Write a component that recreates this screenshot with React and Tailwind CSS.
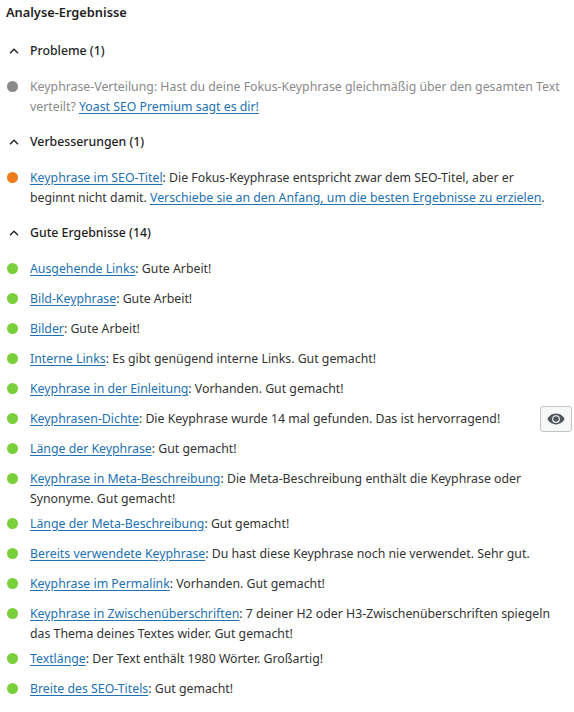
const problems = [
  {
    color: "bg-[#888888]",
    muted: true,
    parts: [
      { text: "Keyphrase-Verteilung: Hast du deine Fokus-Keyphrase gleichmäßig über den gesamten Text verteilt? " },
      { text: "Yoast SEO Premium sagt es dir!", link: true },
    ],
  },
];

const improvements = [
  {
    color: "bg-[#ee7c1b]",
    parts: [
      { text: "Keyphrase im SEO-Titel", link: true },
      { text: ": Die Fokus-Keyphrase entspricht zwar dem SEO-Titel, aber er beginnt nicht damit. " },
      { text: "Verschiebe sie an den Anfang, um die besten Ergebnisse zu erzielen", link: true },
      { text: "." },
    ],
  },
];

const good = [
  ["Ausgehende Links", ": Gute Arbeit!"],
  ["Bild-Keyphrase", ": Gute Arbeit!"],
  ["Bilder", ": Gute Arbeit!"],
  ["Interne Links", ": Es gibt genügend interne Links. Gut gemacht!"],
  ["Keyphrase in der Einleitung", ": Vorhanden. Gut gemacht!"],
  ["Keyphrasen-Dichte", ": Die Keyphrase wurde 14 mal gefunden. Das ist hervorragend!", true],
  ["Länge der Keyphrase", ": Gut gemacht!"],
  ["Keyphrase in Meta-Beschreibung", ": Die Meta-Beschreibung enthält die Keyphrase oder Synonyme. Gut gemacht!"],
  ["Länge der Meta-Beschreibung", ": Gut gemacht!"],
  ["Bereits verwendete Keyphrase", ": Du hast diese Keyphrase noch nie verwendet. Sehr gut."],
  ["Keyphrase im Permalink", ": Vorhanden. Gut gemacht!"],
  ["Keyphrase in Zwischenüberschriften", ": 7 deiner H2 oder H3-Zwischenüberschriften spiegeln das Thema deines Textes wider. Gut gemacht!"],
  ["Textlänge", ": Der Text enthält 1980 Wörter. Großartig!"],
  ["Breite des SEO-Titels", ": Gut gemacht!"],
].map(([link, rest, eye]) => ({
  color: "bg-[#7ad03a]",
  eye,
  parts: [{ text: link, link: true }, { text: rest }],
}));

function Chevron() {
  return (
    <svg width="10" height="6" viewBox="0 0 10 6" className="shrink-0">
      <path d="M1 5.2 L5 1.2 L9 5.2" fill="none" stroke="#1e1e1e" strokeWidth="1.3" />
    </svg>
  );
}

function EyeIcon() {
  return (
    <svg width="18" height="12" viewBox="0 0 20 13">
      <path d="M10 0.5C5 0.5 1.6 4 0.5 6.5 1.6 9 5 12.5 10 12.5s8.4-3.5 9.5-6C18.4 4 15 0.5 10 0.5z" fill="#50575e" />
      <circle cx="10" cy="6.5" r="4.3" fill="#ffffff" />
      <circle cx="10" cy="6.5" r="3.1" fill="#50575e" />
    </svg>
  );
}

function Item({ item }) {
  return (
    <li className="flex items-start min-h-[24px] mb-[6px]">
      <span className={`mt-[4px] ml-[7px] h-[11px] w-[11px] shrink-0 rounded-full ${item.color}`} />
      <p
        className={`ml-[12px] flex-1 pr-[12px] text-[12.3px] leading-[19.5px] ${
          item.muted ? "text-[#8a8a8a]" : "text-[#333333]"
        }`}
      >
        {item.parts.map((p, i) =>
          p.link ? (
            <a key={i} href="#" className="text-[#2271b1] underline underline-offset-[2px]">
              {p.text}
            </a>
          ) : (
            <span key={i}>{p.text}</span>
          )
        )}
      </p>
      {item.eye && (
        <button className="-mt-[3px] ml-2 flex h-[26px] w-[32px] shrink-0 items-center justify-center rounded-[3px] border border-[#c3c4c7] bg-[#f6f7f7]">
          <EyeIcon />
        </button>
      )}
    </li>
  );
}

function Section({ title, items }) {
  return (
    <section>
      <div className="flex h-[40px] items-center pl-[9px]">
        <Chevron />
        <span className="ml-[11px] text-[12.3px] font-medium text-[#1e1e1e]">{title}</span>
      </div>
      <ul className="pt-[6px]">
        {items.map((item, i) => (
          <Item key={i} item={item} />
        ))}
      </ul>
    </section>
  );
}

export default function App() {
  return (
    <div className="w-[574px] h-[712px] bg-white pr-[2px] font-['Noto_Sans',sans-serif]">
      <h2 className="pl-[6px] text-[12.8px] font-semibold leading-[24px] text-[#1e1e1e] mb-[7px]">
        Analyse-Ergebnisse
      </h2>
      <Section title="Probleme (1)" items={problems} />
      <Section title="Verbesserungen (1)" items={improvements} />
      <Section title="Gute Ergebnisse (14)" items={good} />
    </div>
  );
}
